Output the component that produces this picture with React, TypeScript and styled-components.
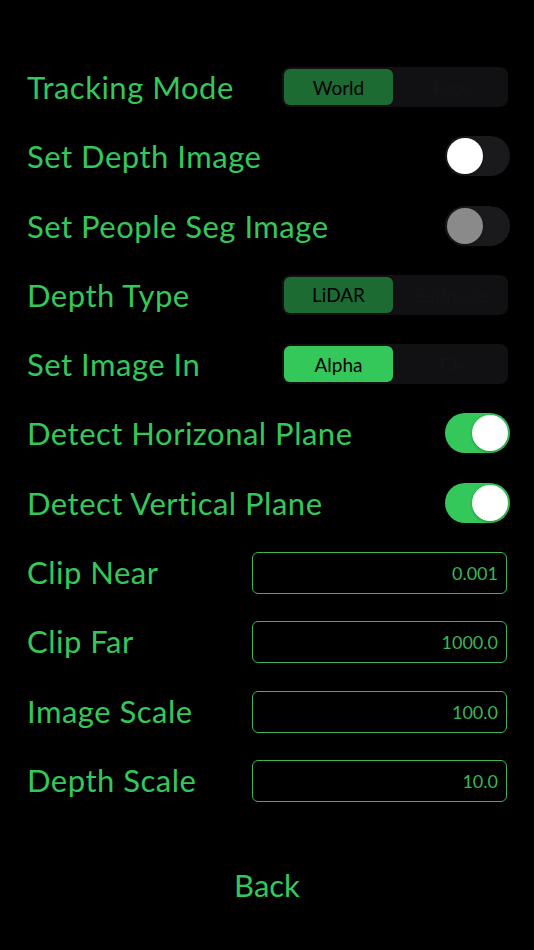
import React from "react";
import styled, { createGlobalStyle } from "styled-components";

const GREEN = "#34c759";
const FIELD_GREEN = "#39b653";

const Global = createGlobalStyle`
  html, body { margin: 0; padding: 0; background: #000; }
  body { font-family: "Lato", "Noto Sans", sans-serif; }
`;

const Page = styled.div`
  width: 534px;
  height: 950px;
  background: #000;
  box-sizing: border-box;
  padding: 67px 24px 0 27px;
  display: flex;
  flex-direction: column;
`;

const Row = styled.div`
  height: 69.3px;
  display: flex;
  align-items: flex-start;
  justify-content: space-between;
`;

const Label = styled.div`
  color: ${GREEN};
  font-size: 31px;
  line-height: 40px;
  letter-spacing: 0.5px;
`;

const Segmented = styled.div`
  width: 226px;
  height: 40px;
  box-sizing: border-box;
  background: #111113;
  border-radius: 8px;
  padding: 2px;
  display: grid;
  grid-template-columns: 1fr 1fr;
  column-gap: 4px;
  margin-right: 2px;
`;

const Segment = styled.div<{ $active?: boolean; $color?: string }>`
  border-radius: 6px;
  background: ${(p) => (p.$active ? p.$color : "transparent")};
  color: ${(p) => (p.$active ? "#000" : "#141416")};
  font-size: 19px;
  display: flex;
  align-items: center;
  justify-content: center;
`;

const Switch = styled.div<{ $on?: boolean }>`
  width: 65px;
  height: 40px;
  box-sizing: border-box;
  border-radius: 20px;
  background: ${(p) => (p.$on ? GREEN : "#1a1a1c")};
  padding: 2px;
  display: flex;
  justify-content: ${(p) => (p.$on ? "flex-end" : "flex-start")};
`;

const Knob = styled.div<{ $grey?: boolean }>`
  width: 36px;
  height: 36px;
  border-radius: 50%;
  background: ${(p) => (p.$grey ? "#8a8a8a" : "#fff")};
  box-shadow: 0 1px 3px rgba(0, 0, 0, 0.3);
`;

const Field = styled.div`
  width: 255px;
  height: 42px;
  box-sizing: border-box;
  border: 1.5px solid ${FIELD_GREEN};
  border-radius: 6px;
  color: ${FIELD_GREEN};
  font-size: 18px;
  display: flex;
  align-items: center;
  justify-content: flex-end;
  padding-right: 8px;
  margin-right: 3px;
`;

const Back = styled.div`
  margin-top: 37px;
  align-self: center;
  color: ${GREEN};
  font-size: 31px;
  margin-right: 3px;
`;

type Item =
  | { kind: "seg"; label: string; a: string; b: string; color: string }
  | { kind: "switch"; label: string; on: boolean; grey?: boolean }
  | { kind: "field"; label: string; value: string };

const items: Item[] = [
  { kind: "seg", label: "Tracking Mode", a: "World", b: "Face", color: "#1c6b32" },
  { kind: "switch", label: "Set Depth Image", on: false },
  { kind: "switch", label: "Set People Seg Image", on: false, grey: true },
  { kind: "seg", label: "Depth Type", a: "LiDAR", b: "Estimate", color: "#1c6b32" },
  { kind: "seg", label: "Set Image In", a: "Alpha", b: "Tile", color: GREEN },
  { kind: "switch", label: "Detect Horizonal Plane", on: true },
  { kind: "switch", label: "Detect Vertical Plane", on: true },
  { kind: "field", label: "Clip Near", value: "0.001" },
  { kind: "field", label: "Clip Far", value: "1000.0" },
  { kind: "field", label: "Image Scale", value: "100.0" },
  { kind: "field", label: "Depth Scale", value: "10.0" },
];

export default function App() {
  return (
    <>
      <Global />
      <Page>
        {items.map((it) => (
          <Row key={it.label}>
            <Label>{it.label}</Label>
            {it.kind === "seg" && (
              <Segmented>
                <Segment $active $color={it.color}>{it.a}</Segment>
                <Segment>{it.b}</Segment>
              </Segmented>
            )}
            {it.kind === "switch" && (
              <Switch $on={it.on}>
                <Knob $grey={it.grey} />
              </Switch>
            )}
            {it.kind === "field" && <Field>{it.value}</Field>}
          </Row>
        ))}
        <Back>Back</Back>
      </Page>
    </>
  );
}
